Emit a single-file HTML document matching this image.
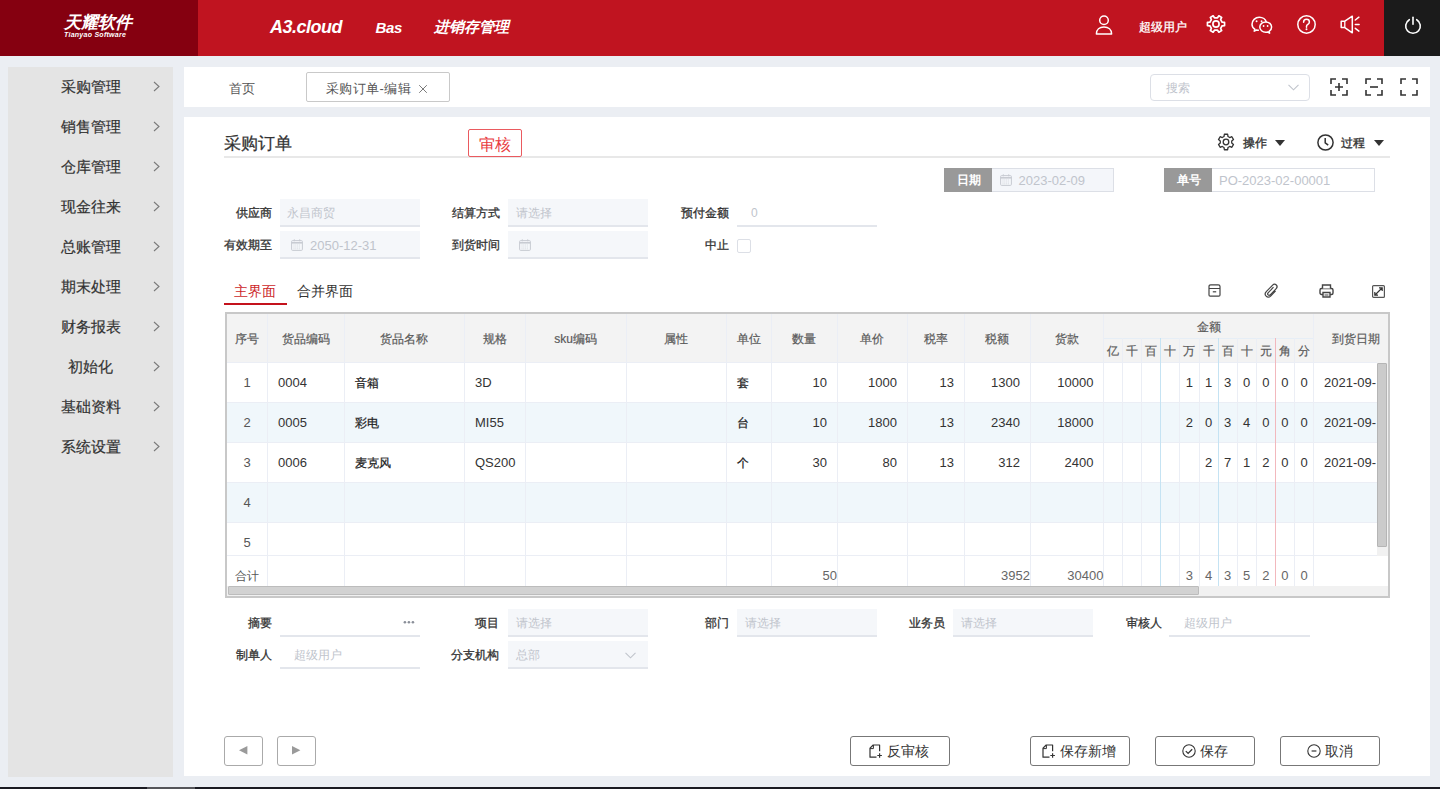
<!DOCTYPE html><html><head><meta charset="utf-8"><style>
*{box-sizing:border-box;margin:0;padding:0}
html,body{width:1440px;height:789px;overflow:hidden;background:#ebeef3;font-family:"Liberation Sans",sans-serif;color:#333;position:relative}
.t{position:absolute;white-space:nowrap}
.b{position:absolute}
.ht{position:absolute;color:#fff;font-weight:bold;font-style:italic;white-space:nowrap}
svg{position:absolute;overflow:visible}
.lbl{position:absolute;white-space:nowrap;font-size:12px;line-height:16px;color:#333;font-weight:normal;-webkit-text-stroke:0.3px #333;text-align:right}
.inp{position:absolute;background:#f5f7fa;border-bottom:2px solid #e3e6ec}
.inpw{position:absolute;border-bottom:2px solid #e3e6ec}
.ph{position:absolute;white-space:nowrap;font-size:12px;line-height:16px;color:#c0c4cc}
.cj{-webkit-text-stroke:0.25px #222}
.hd{-webkit-text-stroke:0.2px #5a5a5a}
.btn{position:absolute;border:1px solid #777;border-radius:3px;background:#fff;font-size:14px;line-height:28px;color:#333;text-align:center;white-space:nowrap}
</style></head><body>
<div class="b" style="left:0;top:0;width:1440px;height:56px;background:#c01420"></div>
<div class="b" style="left:0;top:0;width:198px;height:56px;background:#850010"></div>
<div class="ht" style="left:63.5px;top:13.3px;font-size:17px;line-height:19px;letter-spacing:0.3px">天耀软件</div>
<div class="ht" style="left:64px;top:31px;font-size:7px;line-height:7px;letter-spacing:0.27px">Tianyao Software</div>
<div class="ht" style="left:270px;top:16px;font-size:18px;line-height:22px;letter-spacing:-0.5px">A3.cloud</div>
<div class="ht" style="left:375.5px;top:18px;font-size:15px;line-height:20px;letter-spacing:-0.3px">Bas</div>
<div class="ht" style="left:434px;top:17px;font-size:15px;line-height:20px">进销存管理</div>
<div class="t" style="left:1139px;top:19px;font-size:12px;line-height:16px;color:#fff;-webkit-text-stroke:0.3px #fff">超级用户</div>
<svg style="left:1095px;top:15px" width="18" height="20" viewBox="0 0 18 20"><circle cx="9" cy="5.3" r="4.3" fill="none" stroke="#fff" stroke-width="1.5"/><path d="M1.4 19.1C1.4 14.6 4.6 12.1 9 12.1s7.6 2.5 7.6 7z" fill="none" stroke="#fff" stroke-width="1.5" stroke-linejoin="round"/></svg>
<svg style="left:1206.3px;top:14px" width="20" height="20" viewBox="0 0 20 20"><path fill="none" stroke="#fff" stroke-width="1.7" stroke-linejoin="round" d="M16.15 8.21 L18.55 8.37 L18.55 11.63 L16.15 11.79 L14.62 14.43 L15.68 16.59 L12.86 18.22 L11.53 16.22 L8.47 16.22 L7.14 18.22 L4.32 16.59 L5.38 14.43 L3.85 11.79 L1.45 11.63 L1.45 8.37 L3.85 8.21 L5.38 5.57 L4.32 3.41 L7.14 1.78 L8.47 3.78 L11.53 3.78 L12.86 1.78 L15.68 3.41 L14.62 5.57Z"/><circle cx="10" cy="10" r="3.1" fill="none" stroke="#fff" stroke-width="1.7"/></svg>
<svg style="left:1251px;top:16px" width="22" height="19" viewBox="0 0 22 19"><path d="M7.9 14.3c-.8 0-1.6-.1-2.3-.3L3.2 15.2l.6-2C2 12 1 10.3 1 8.2 1 4.7 4.2 1.2 8.3 1.2c3.5 0 6.4 2.2 7 5" fill="none" stroke="#fff" stroke-width="1.5" stroke-linejoin="round"/><path d="M14.7 5.9c-3.3 0-5.9 2.3-5.9 5.2s2.6 5.2 5.9 5.2c.7 0 1.3-.1 1.9-.3l2 1.1-.5-1.8c1.5-.9 2.5-2.4 2.5-4.2 0-2.9-2.6-5.2-5.9-5.2z" fill="none" stroke="#fff" stroke-width="1.5" stroke-linejoin="round"/><circle cx="5.6" cy="5.3" r=".95" fill="#fff"/><circle cx="10.6" cy="5.3" r=".95" fill="#fff"/><circle cx="12.6" cy="10" r=".9" fill="#fff"/><circle cx="16.6" cy="10" r=".9" fill="#fff"/></svg>
<svg style="left:1297px;top:15px" width="19" height="19" viewBox="0 0 19 19"><circle cx="9.5" cy="9.5" r="8.7" fill="none" stroke="#fff" stroke-width="1.5"/><path d="M6.6 7.2c0-1.7 1.3-2.9 2.9-2.9s2.9 1.2 2.9 2.7c0 1.4-1 2-1.9 2.6-.7.5-1 .9-1 1.8v.8" fill="none" stroke="#fff" stroke-width="1.5" stroke-linecap="round"/><circle cx="9.5" cy="14.2" r="1" fill="#fff"/></svg>
<svg style="left:1340px;top:15px" width="20" height="19" viewBox="0 0 20 19"><path d="M1.2 6.2h3.6L12.3 1.2v16.6L4.8 12.6H1.2z" fill="none" stroke="#fff" stroke-width="1.5" stroke-linejoin="round"/><path d="M4.8 6.2v6.4" stroke="#fff" stroke-width="1.3"/><path d="M15.3 5l3.6-2.8M15.3 9.4h3.8M15.3 13.3l3.6 2.8" stroke="#fff" stroke-width="1.5" stroke-linecap="round"/></svg>
<div class="b" style="left:1384px;top:0;width:56px;height:56px;background:#1b1b1b"></div>
<svg style="left:1404px;top:15.5px" width="18" height="18" viewBox="0 0 18 18"><path d="M5.3 3.7A7.3 7.3 0 1 0 12.7 3.7" fill="none" stroke="#fff" stroke-width="1.6" stroke-linecap="round"/><path d="M9 1.2v7" stroke="#fff" stroke-width="1.6" stroke-linecap="round"/></svg>
<div class="b" style="left:8px;top:67px;width:165px;height:710px;background:#e4e4e4"></div>
<div class="t" style="left:61px;top:77px;font-size:15px;line-height:20px;color:#333;-webkit-text-stroke:0.2px #333">采购管理</div>
<svg style="left:153px;top:80.5px" width="7" height="11" viewBox="0 0 7 11"><path d="M1 1l5 4.5L1 10" fill="none" stroke="#7a7a7a" stroke-width="1.1"/></svg>
<div class="t" style="left:61px;top:117px;font-size:15px;line-height:20px;color:#333;-webkit-text-stroke:0.2px #333">销售管理</div>
<svg style="left:153px;top:120.5px" width="7" height="11" viewBox="0 0 7 11"><path d="M1 1l5 4.5L1 10" fill="none" stroke="#7a7a7a" stroke-width="1.1"/></svg>
<div class="t" style="left:61px;top:157px;font-size:15px;line-height:20px;color:#333;-webkit-text-stroke:0.2px #333">仓库管理</div>
<svg style="left:153px;top:160.5px" width="7" height="11" viewBox="0 0 7 11"><path d="M1 1l5 4.5L1 10" fill="none" stroke="#7a7a7a" stroke-width="1.1"/></svg>
<div class="t" style="left:61px;top:197px;font-size:15px;line-height:20px;color:#333;-webkit-text-stroke:0.2px #333">现金往来</div>
<svg style="left:153px;top:200.5px" width="7" height="11" viewBox="0 0 7 11"><path d="M1 1l5 4.5L1 10" fill="none" stroke="#7a7a7a" stroke-width="1.1"/></svg>
<div class="t" style="left:61px;top:237px;font-size:15px;line-height:20px;color:#333;-webkit-text-stroke:0.2px #333">总账管理</div>
<svg style="left:153px;top:240.5px" width="7" height="11" viewBox="0 0 7 11"><path d="M1 1l5 4.5L1 10" fill="none" stroke="#7a7a7a" stroke-width="1.1"/></svg>
<div class="t" style="left:61px;top:277px;font-size:15px;line-height:20px;color:#333;-webkit-text-stroke:0.2px #333">期末处理</div>
<svg style="left:153px;top:280.5px" width="7" height="11" viewBox="0 0 7 11"><path d="M1 1l5 4.5L1 10" fill="none" stroke="#7a7a7a" stroke-width="1.1"/></svg>
<div class="t" style="left:61px;top:317px;font-size:15px;line-height:20px;color:#333;-webkit-text-stroke:0.2px #333">财务报表</div>
<svg style="left:153px;top:320.5px" width="7" height="11" viewBox="0 0 7 11"><path d="M1 1l5 4.5L1 10" fill="none" stroke="#7a7a7a" stroke-width="1.1"/></svg>
<div class="t" style="left:68px;top:357px;font-size:15px;line-height:20px;color:#333;-webkit-text-stroke:0.2px #333">初始化</div>
<svg style="left:153px;top:360.5px" width="7" height="11" viewBox="0 0 7 11"><path d="M1 1l5 4.5L1 10" fill="none" stroke="#7a7a7a" stroke-width="1.1"/></svg>
<div class="t" style="left:61px;top:397px;font-size:15px;line-height:20px;color:#333;-webkit-text-stroke:0.2px #333">基础资料</div>
<svg style="left:153px;top:400.5px" width="7" height="11" viewBox="0 0 7 11"><path d="M1 1l5 4.5L1 10" fill="none" stroke="#7a7a7a" stroke-width="1.1"/></svg>
<div class="t" style="left:61px;top:437px;font-size:15px;line-height:20px;color:#333;-webkit-text-stroke:0.2px #333">系统设置</div>
<svg style="left:153px;top:440.5px" width="7" height="11" viewBox="0 0 7 11"><path d="M1 1l5 4.5L1 10" fill="none" stroke="#7a7a7a" stroke-width="1.1"/></svg>
<div class="b" style="left:184px;top:67px;width:1246px;height:40px;background:#fff"></div>
<div class="t" style="left:229px;top:80px;font-size:13px;line-height:17px;color:#555">首页</div>
<div class="b" style="left:306px;top:72px;width:144px;height:30px;border:1px solid #c9c9c9;border-radius:2px"></div>
<div class="t" style="left:326px;top:80px;font-size:13px;line-height:17px;color:#555;letter-spacing:0.4px">采购订单-编辑</div>
<svg style="left:418px;top:84px" width="10" height="10" viewBox="0 0 10 10"><path d="M1.2 1.2l7.6 7.6M8.8 1.2L1.2 8.8" stroke="#7a7a7a" stroke-width="1"/></svg>
<div class="b" style="left:1150px;top:74px;width:160px;height:27px;border:1px solid #dcdfe6;border-radius:4px"></div>
<div class="t" style="left:1166px;top:80px;font-size:12px;line-height:16px;color:#c0c4cc">搜索</div>
<svg style="left:1288px;top:84px" width="11" height="7" viewBox="0 0 11 7"><path d="M.5 .8l5 5 5-5" fill="none" stroke="#c0c4cc" stroke-width="1.1"/></svg>
<svg style="left:1330px;top:78px" width="18" height="18" viewBox="0 0 18 18"><path d="M1 6V1h5M12 1h5v5M17 12v5h-5M6 17H1v-5" fill="none" stroke="#333" stroke-width="1.6"/><path d="M9 5v8M5 9h8" stroke="#333" stroke-width="1.6"/></svg>
<svg style="left:1365px;top:78px" width="18" height="18" viewBox="0 0 18 18"><path d="M1 6V1h5M12 1h5v5M17 12v5h-5M6 17H1v-5" fill="none" stroke="#333" stroke-width="1.6"/><path d="M5 9h8" stroke="#333" stroke-width="1.6"/></svg>
<svg style="left:1400px;top:78px" width="18" height="18" viewBox="0 0 18 18"><path d="M1 6V1h5M12 1h5v5M17 12v5h-5M6 17H1v-5" fill="none" stroke="#333" stroke-width="1.6"/></svg>
<div class="b" style="left:184px;top:117px;width:1246px;height:659px;background:#fff"></div>
<div class="t" style="left:224px;top:134px;font-size:17px;line-height:20px;color:#333;-webkit-text-stroke:0.25px #333">采购订单</div>
<div class="b" style="left:224px;top:156px;width:1166px;height:2px;background:#e8e8e8"></div>
<div class="b" style="left:468px;top:129px;width:54px;height:28px;border:1px solid #ea5a5f;border-radius:2px"></div>
<div class="t" style="left:479px;top:135.5px;font-size:16px;line-height:18px;color:#e83a40">审核</div>
<svg style="left:1216.4px;top:132.2px" width="20" height="20" viewBox="0 0 20 20"><path fill="none" stroke="#333" stroke-width="1.3" stroke-linejoin="round" d="M15.72 10.97 L17.51 12.44 L15.87 15.29 L13.70 14.47 L12.02 15.44 L11.64 17.73 L8.36 17.73 L7.98 15.44 L6.30 14.47 L4.13 15.29 L2.49 12.44 L4.28 10.97 L4.28 9.03 L2.49 7.56 L4.13 4.71 L6.30 5.53 L7.98 4.56 L8.36 2.27 L11.64 2.27 L12.02 4.56 L13.70 5.53 L15.87 4.71 L17.51 7.56 L15.72 9.03Z"/><circle cx="10" cy="10" r="2.8" fill="none" stroke="#333" stroke-width="1.3"/></svg>
<div class="t" style="left:1243px;top:135px;font-size:12px;line-height:16px;color:#333;-webkit-text-stroke:0.35px #333">操作</div>
<svg style="left:1275px;top:140px" width="10" height="6" viewBox="0 0 10 6"><path d="M0 0h10L5 6z" fill="#333"/></svg>
<svg style="left:1317px;top:134px" width="17" height="17" viewBox="0 0 17 17"><circle cx="8.5" cy="8.5" r="7.6" fill="none" stroke="#333" stroke-width="1.5"/><path d="M8.2 4v4.8l3 2.4" fill="none" stroke="#333" stroke-width="1.5"/></svg>
<div class="t" style="left:1341px;top:135px;font-size:12px;line-height:16px;color:#333;-webkit-text-stroke:0.35px #333">过程</div>
<svg style="left:1374px;top:140px" width="10" height="6" viewBox="0 0 10 6"><path d="M0 0h10L5 6z" fill="#333"/></svg>
<div class="b" style="left:944px;top:168px;width:48px;height:24px;background:#999"></div>
<div class="t" style="left:956.5px;top:172px;font-size:12px;line-height:16px;color:#fff;font-weight:bold">日期</div>
<div class="b" style="left:992px;top:168px;width:122px;height:24px;background:#f4f6fa;border:1px solid #dcdfe6;border-left:none"></div>
<svg style="left:999.5px;top:173.5px" width="12" height="12" viewBox="0 0 12 12"><rect x=".6" y="1.6" width="10.8" height="9.8" rx="1" fill="none" stroke="#c8cbd2" stroke-width="1"/><path d="M.6 3.8h10.8" stroke="#c8cbd2" stroke-width="1.6"/><path d="M3.3 .3v2M8.7 .3v2" stroke="#c8cbd2" stroke-width="1"/><path d="M2.5 6h7M2.5 8h7M2.5 9.8h7" stroke="#c8cbd2" stroke-width=".6" stroke-dasharray="1 .8"/></svg>
<div class="t" style="left:1018.5px;top:172.5px;font-size:13px;line-height:16px;color:#c0c4cc">2023-02-09</div>
<div class="b" style="left:1164px;top:168px;width:49px;height:24px;background:#999"></div>
<div class="t" style="left:1176.5px;top:172px;font-size:12px;line-height:16px;color:#fff;font-weight:bold">单号</div>
<div class="b" style="left:1212px;top:168px;width:163px;height:24px;background:#fff;border:1px solid #dcdfe6;border-left:none"></div>
<div class="t" style="left:1219px;top:172.5px;font-size:13px;line-height:16px;color:#c0c4cc">PO-2023-02-00001</div>
<div class="lbl" style="left:72px;width:200px;top:205px">供应商</div>
<div class="lbl" style="left:72px;width:200px;top:237px">有效期至</div>
<div class="lbl" style="left:300px;width:200px;top:205px">结算方式</div>
<div class="lbl" style="left:300px;width:200px;top:237px">到货时间</div>
<div class="lbl" style="left:529px;width:200px;top:205px">预付金额</div>
<div class="lbl" style="left:529px;width:200px;top:237px">中止</div>
<div class="inp" style="left:280px;top:199px;width:140px;height:28px"></div>
<div class="ph" style="left:287px;top:205px">永昌商贸</div>
<div class="inp" style="left:280px;top:231px;width:140px;height:28px"></div>
<svg style="left:291px;top:238.5px" width="12" height="12" viewBox="0 0 12 12"><rect x=".6" y="1.6" width="10.8" height="9.8" rx="1" fill="none" stroke="#c8cbd2" stroke-width="1"/><path d="M.6 3.8h10.8" stroke="#c8cbd2" stroke-width="1.6"/><path d="M3.3 .3v2M8.7 .3v2" stroke="#c8cbd2" stroke-width="1"/><path d="M2.5 6h7M2.5 8h7M2.5 9.8h7" stroke="#c8cbd2" stroke-width=".6" stroke-dasharray="1 .8"/></svg>
<div class="t" style="left:310px;top:238px;font-size:13px;line-height:16px;color:#c0c4cc">2050-12-31</div>
<div class="inp" style="left:508px;top:199px;width:140px;height:28px"></div>
<div class="ph" style="left:516px;top:205px">请选择</div>
<div class="inp" style="left:508px;top:231px;width:140px;height:28px"></div>
<svg style="left:519px;top:238.5px" width="12" height="12" viewBox="0 0 12 12"><rect x=".6" y="1.6" width="10.8" height="9.8" rx="1" fill="none" stroke="#c8cbd2" stroke-width="1"/><path d="M.6 3.8h10.8" stroke="#c8cbd2" stroke-width="1.6"/><path d="M3.3 .3v2M8.7 .3v2" stroke="#c8cbd2" stroke-width="1"/><path d="M2.5 6h7M2.5 8h7M2.5 9.8h7" stroke="#c8cbd2" stroke-width=".6" stroke-dasharray="1 .8"/></svg>
<div class="inpw" style="left:737px;top:199px;width:140px;height:28px"></div>
<div class="ph" style="left:751px;top:205px">0</div>
<div class="b" style="left:737px;top:239px;width:14px;height:14px;border:1px solid #dcdfe6;border-radius:2px;background:#fff"></div>
<div class="t" style="left:234px;top:282px;font-size:14px;line-height:18px;color:#cc1f2a">主界面</div>
<div class="b" style="left:224px;top:303px;width:63px;height:2px;background:#c4121c"></div>
<div class="t" style="left:297px;top:282px;font-size:14px;line-height:18px;color:#333">合并界面</div>
<svg style="left:1208px;top:284px" width="14" height="13" viewBox="0 0 14 13"><path d="M1 4.5V2.5Q1 .8 2.7 .8h7.6Q12 .8 12 2.5v2M1 4.5h11v6.5q0 1.2-1.2 1.2H2.2Q1 12.2 1 11z" fill="none" stroke="#444" stroke-width="1.2"/><path d="M4.8 7.8h3.4" stroke="#444" stroke-width="1.2"/></svg>
<svg style="left:1264px;top:284px" width="14" height="14" viewBox="0 0 14 14"><path d="M9.5 3.2L4.3 8.6c-.8.8-.8 1.7-.2 2.3s1.5.6 2.3-.2l5.6-5.8c1.3-1.3 1.3-2.9.3-3.9s-2.6-1-3.9.3L2.5 7.4C.9 9 .9 11 2.1 12.2s3.2 1.2 4.8-.4l4.7-4.9" fill="none" stroke="#444" stroke-width="1.2"/></svg>
<svg style="left:1319px;top:284px" width="15" height="14" viewBox="0 0 15 14"><rect x="1" y="4.5" width="13" height="6" rx="1.5" fill="none" stroke="#444" stroke-width="1.4"/><path d="M3.5 4.5V1h8v3.5M4 8.5h7v4.5H4z" fill="#fff" stroke="#444" stroke-width="1.4"/><path d="M5.5 11h4" stroke="#444" stroke-width="1"/></svg>
<svg style="left:1372px;top:285px" width="13" height="13" viewBox="0 0 13 13"><rect x=".6" y=".6" width="11.8" height="11.8" rx="1" fill="none" stroke="#555" stroke-width="1.2"/><path d="M3 10L10 3M7 2.8h3.2V6M2.8 7v3.2H6" fill="none" stroke="#333" stroke-width="1.2"/></svg>
<div class="b" style="left:225px;top:312px;width:1165px;height:286px;border:2px solid #c8c8c8;background:#fff"></div>
<div class="b" style="left:227px;top:314px;width:1161px;height:49px;background:#f3f3f3"></div>
<div class="b" style="left:227px;top:363px;width:1150px;height:40px;background:#fff"></div>
<div class="b" style="left:227px;top:403px;width:1150px;height:40px;background:#f0f7fb"></div>
<div class="b" style="left:227px;top:443px;width:1150px;height:40px;background:#fff"></div>
<div class="b" style="left:227px;top:483px;width:1150px;height:40px;background:#f0f7fb"></div>
<div class="b" style="left:227px;top:523px;width:1150px;height:40px;background:#fff"></div>
<div class="b" style="left:227px;top:556px;width:1161px;height:30px;background:#fff"></div>
<div class="b" style="left:227px;top:362px;width:1150px;height:1px;background:#ebeef5"></div>
<div class="b" style="left:227px;top:402px;width:1150px;height:1px;background:#ebeef5"></div>
<div class="b" style="left:227px;top:442px;width:1150px;height:1px;background:#ebeef5"></div>
<div class="b" style="left:227px;top:482px;width:1150px;height:1px;background:#ebeef5"></div>
<div class="b" style="left:227px;top:522px;width:1150px;height:1px;background:#ebeef5"></div>
<div class="b" style="left:227px;top:555px;width:1150px;height:1px;background:#ebeef5"></div>
<div class="b" style="left:1103.5px;top:338px;width:210.0px;height:1px;background:#e6eef6"></div>
<div class="b" style="left:266.5px;top:314px;width:1px;height:272px;background:#ebeef5"></div>
<div class="b" style="left:343.5px;top:314px;width:1px;height:272px;background:#ebeef5"></div>
<div class="b" style="left:463.5px;top:314px;width:1px;height:272px;background:#ebeef5"></div>
<div class="b" style="left:524.5px;top:314px;width:1px;height:272px;background:#ebeef5"></div>
<div class="b" style="left:625.5px;top:314px;width:1px;height:272px;background:#ebeef5"></div>
<div class="b" style="left:725.5px;top:314px;width:1px;height:272px;background:#ebeef5"></div>
<div class="b" style="left:770.5px;top:314px;width:1px;height:272px;background:#ebeef5"></div>
<div class="b" style="left:836.5px;top:314px;width:1px;height:272px;background:#ebeef5"></div>
<div class="b" style="left:906.5px;top:314px;width:1px;height:272px;background:#ebeef5"></div>
<div class="b" style="left:963.5px;top:314px;width:1px;height:272px;background:#ebeef5"></div>
<div class="b" style="left:1029.5px;top:314px;width:1px;height:272px;background:#ebeef5"></div>
<div class="b" style="left:1103.0px;top:314px;width:1px;height:272px;background:#ebeef5"></div>
<div class="b" style="left:1122.1px;top:338px;width:1px;height:248px;background:#ebeef5"></div>
<div class="b" style="left:1141.2px;top:338px;width:1px;height:248px;background:#ebeef5"></div>
<div class="b" style="left:1160.3px;top:338px;width:1px;height:248px;background:#c5e3f3"></div>
<div class="b" style="left:1179.4px;top:338px;width:1px;height:248px;background:#ebeef5"></div>
<div class="b" style="left:1198.5px;top:338px;width:1px;height:248px;background:#ebeef5"></div>
<div class="b" style="left:1217.6px;top:338px;width:1px;height:248px;background:#c5e3f3"></div>
<div class="b" style="left:1236.7px;top:338px;width:1px;height:248px;background:#ebeef5"></div>
<div class="b" style="left:1255.8px;top:338px;width:1px;height:248px;background:#ebeef5"></div>
<div class="b" style="left:1274.9px;top:338px;width:1px;height:248px;background:#f2b8bd"></div>
<div class="b" style="left:1294.0px;top:338px;width:1px;height:248px;background:#ebeef5"></div>
<div class="b" style="left:1313.1px;top:314px;width:1px;height:272px;background:#ebeef5"></div>
<div class="t hd" style="left:227px;width:40px;top:329.5px;height:18px;line-height:18px;text-align:center;font-size:12px;color:#5a5a5a;font-weight:normal">序号</div>
<div class="t hd" style="left:267px;width:77px;top:329.5px;height:18px;line-height:18px;text-align:center;font-size:12px;color:#5a5a5a;font-weight:normal">货品编码</div>
<div class="t hd" style="left:344px;width:120px;top:329.5px;height:18px;line-height:18px;text-align:center;font-size:12px;color:#5a5a5a;font-weight:normal">货品名称</div>
<div class="t hd" style="left:464px;width:61px;top:329.5px;height:18px;line-height:18px;text-align:center;font-size:12px;color:#5a5a5a;font-weight:normal">规格</div>
<div class="t hd" style="left:525px;width:101px;top:329.5px;height:18px;line-height:18px;text-align:center;font-size:12px;color:#5a5a5a;font-weight:normal">sku编码</div>
<div class="t hd" style="left:626px;width:100px;top:329.5px;height:18px;line-height:18px;text-align:center;font-size:12px;color:#5a5a5a;font-weight:normal">属性</div>
<div class="t hd" style="left:726px;width:45px;top:329.5px;height:18px;line-height:18px;text-align:center;font-size:12px;color:#5a5a5a;font-weight:normal">单位</div>
<div class="t hd" style="left:771px;width:66px;top:329.5px;height:18px;line-height:18px;text-align:center;font-size:12px;color:#5a5a5a;font-weight:normal">数量</div>
<div class="t hd" style="left:837px;width:70px;top:329.5px;height:18px;line-height:18px;text-align:center;font-size:12px;color:#5a5a5a;font-weight:normal">单价</div>
<div class="t hd" style="left:907px;width:57px;top:329.5px;height:18px;line-height:18px;text-align:center;font-size:12px;color:#5a5a5a;font-weight:normal">税率</div>
<div class="t hd" style="left:964px;width:66px;top:329.5px;height:18px;line-height:18px;text-align:center;font-size:12px;color:#5a5a5a;font-weight:normal">税额</div>
<div class="t hd" style="left:1030px;width:73.5px;top:329.5px;height:18px;line-height:18px;text-align:center;font-size:12px;color:#5a5a5a;font-weight:normal">货款</div>
<div class="t hd" style="left:1103.5px;width:210.0px;top:317.5px;height:18px;line-height:18px;text-align:center;font-size:12px;color:#5a5a5a;font-weight:normal">金额</div>
<div class="t hd" style="left:1103.5px;width:19.09999999999991px;top:341.5px;height:18px;line-height:18px;text-align:center;font-size:12px;color:#5a5a5a;font-weight:normal">亿</div>
<div class="t hd" style="left:1122.6px;width:19.100000000000136px;top:341.5px;height:18px;line-height:18px;text-align:center;font-size:12px;color:#5a5a5a;font-weight:normal">千</div>
<div class="t hd" style="left:1141.7px;width:19.09999999999991px;top:341.5px;height:18px;line-height:18px;text-align:center;font-size:12px;color:#5a5a5a;font-weight:normal">百</div>
<div class="t hd" style="left:1160.8px;width:19.100000000000136px;top:341.5px;height:18px;line-height:18px;text-align:center;font-size:12px;color:#5a5a5a;font-weight:normal">十</div>
<div class="t hd" style="left:1179.9px;width:19.09999999999991px;top:341.5px;height:18px;line-height:18px;text-align:center;font-size:12px;color:#5a5a5a;font-weight:normal">万</div>
<div class="t hd" style="left:1199.0px;width:19.09999999999991px;top:341.5px;height:18px;line-height:18px;text-align:center;font-size:12px;color:#5a5a5a;font-weight:normal">千</div>
<div class="t hd" style="left:1218.1px;width:19.100000000000136px;top:341.5px;height:18px;line-height:18px;text-align:center;font-size:12px;color:#5a5a5a;font-weight:normal">百</div>
<div class="t hd" style="left:1237.2px;width:19.09999999999991px;top:341.5px;height:18px;line-height:18px;text-align:center;font-size:12px;color:#5a5a5a;font-weight:normal">十</div>
<div class="t hd" style="left:1256.3px;width:19.100000000000136px;top:341.5px;height:18px;line-height:18px;text-align:center;font-size:12px;color:#5a5a5a;font-weight:normal">元</div>
<div class="t hd" style="left:1275.4px;width:19.09999999999991px;top:341.5px;height:18px;line-height:18px;text-align:center;font-size:12px;color:#5a5a5a;font-weight:normal">角</div>
<div class="t hd" style="left:1294.5px;width:19.09999999999991px;top:341.5px;height:18px;line-height:18px;text-align:center;font-size:12px;color:#5a5a5a;font-weight:normal">分</div>
<div class="t hd" style="left:1332px;top:329.5px;height:18px;line-height:18px;font-size:12px;color:#5a5a5a">到货日期</div>
<div class="t " style="left:227px;width:40px;top:374px;height:18px;line-height:18px;text-align:center;font-size:13px;color:#555;font-weight:normal">1</div>
<div class="t " style="left:278px;top:374px;height:18px;line-height:18px;font-size:13px;color:#333">0004</div>
<div class="t cj" style="left:355px;top:374px;height:18px;line-height:18px;font-size:12px;color:#222">音箱</div>
<div class="t " style="left:475px;top:374px;height:18px;line-height:18px;font-size:13px;color:#333">3D</div>
<div class="t cj" style="left:737px;top:374px;height:18px;line-height:18px;font-size:12px;color:#222">套</div>
<div class="t" style="left:627px;width:200px;top:374px;height:18px;line-height:18px;text-align:right;font-size:13px;color:#333">10</div>
<div class="t" style="left:697px;width:200px;top:374px;height:18px;line-height:18px;text-align:right;font-size:13px;color:#333">1000</div>
<div class="t" style="left:754px;width:200px;top:374px;height:18px;line-height:18px;text-align:right;font-size:13px;color:#333">13</div>
<div class="t" style="left:820px;width:200px;top:374px;height:18px;line-height:18px;text-align:right;font-size:13px;color:#333">1300</div>
<div class="t" style="left:893.5px;width:200px;top:374px;height:18px;line-height:18px;text-align:right;font-size:13px;color:#333">10000</div>
<div class="t " style="left:1294.5px;width:19.09999999999991px;top:374px;height:18px;line-height:18px;text-align:center;font-size:13px;color:#333;font-weight:normal">0</div>
<div class="t " style="left:1275.4px;width:19.09999999999991px;top:374px;height:18px;line-height:18px;text-align:center;font-size:13px;color:#333;font-weight:normal">0</div>
<div class="t " style="left:1256.3px;width:19.100000000000136px;top:374px;height:18px;line-height:18px;text-align:center;font-size:13px;color:#333;font-weight:normal">0</div>
<div class="t " style="left:1237.2px;width:19.09999999999991px;top:374px;height:18px;line-height:18px;text-align:center;font-size:13px;color:#333;font-weight:normal">0</div>
<div class="t " style="left:1218.1px;width:19.100000000000136px;top:374px;height:18px;line-height:18px;text-align:center;font-size:13px;color:#333;font-weight:normal">3</div>
<div class="t " style="left:1199.0px;width:19.09999999999991px;top:374px;height:18px;line-height:18px;text-align:center;font-size:13px;color:#333;font-weight:normal">1</div>
<div class="t " style="left:1179.9px;width:19.09999999999991px;top:374px;height:18px;line-height:18px;text-align:center;font-size:13px;color:#333;font-weight:normal">1</div>
<div class="t " style="left:1324px;top:374px;height:18px;line-height:18px;font-size:13px;color:#333">2021-09-</div>
<div class="t " style="left:227px;width:40px;top:414px;height:18px;line-height:18px;text-align:center;font-size:13px;color:#555;font-weight:normal">2</div>
<div class="t " style="left:278px;top:414px;height:18px;line-height:18px;font-size:13px;color:#333">0005</div>
<div class="t cj" style="left:355px;top:414px;height:18px;line-height:18px;font-size:12px;color:#222">彩电</div>
<div class="t " style="left:475px;top:414px;height:18px;line-height:18px;font-size:13px;color:#333">MI55</div>
<div class="t cj" style="left:737px;top:414px;height:18px;line-height:18px;font-size:12px;color:#222">台</div>
<div class="t" style="left:627px;width:200px;top:414px;height:18px;line-height:18px;text-align:right;font-size:13px;color:#333">10</div>
<div class="t" style="left:697px;width:200px;top:414px;height:18px;line-height:18px;text-align:right;font-size:13px;color:#333">1800</div>
<div class="t" style="left:754px;width:200px;top:414px;height:18px;line-height:18px;text-align:right;font-size:13px;color:#333">13</div>
<div class="t" style="left:820px;width:200px;top:414px;height:18px;line-height:18px;text-align:right;font-size:13px;color:#333">2340</div>
<div class="t" style="left:893.5px;width:200px;top:414px;height:18px;line-height:18px;text-align:right;font-size:13px;color:#333">18000</div>
<div class="t " style="left:1294.5px;width:19.09999999999991px;top:414px;height:18px;line-height:18px;text-align:center;font-size:13px;color:#333;font-weight:normal">0</div>
<div class="t " style="left:1275.4px;width:19.09999999999991px;top:414px;height:18px;line-height:18px;text-align:center;font-size:13px;color:#333;font-weight:normal">0</div>
<div class="t " style="left:1256.3px;width:19.100000000000136px;top:414px;height:18px;line-height:18px;text-align:center;font-size:13px;color:#333;font-weight:normal">0</div>
<div class="t " style="left:1237.2px;width:19.09999999999991px;top:414px;height:18px;line-height:18px;text-align:center;font-size:13px;color:#333;font-weight:normal">4</div>
<div class="t " style="left:1218.1px;width:19.100000000000136px;top:414px;height:18px;line-height:18px;text-align:center;font-size:13px;color:#333;font-weight:normal">3</div>
<div class="t " style="left:1199.0px;width:19.09999999999991px;top:414px;height:18px;line-height:18px;text-align:center;font-size:13px;color:#333;font-weight:normal">0</div>
<div class="t " style="left:1179.9px;width:19.09999999999991px;top:414px;height:18px;line-height:18px;text-align:center;font-size:13px;color:#333;font-weight:normal">2</div>
<div class="t " style="left:1324px;top:414px;height:18px;line-height:18px;font-size:13px;color:#333">2021-09-</div>
<div class="t " style="left:227px;width:40px;top:454px;height:18px;line-height:18px;text-align:center;font-size:13px;color:#555;font-weight:normal">3</div>
<div class="t " style="left:278px;top:454px;height:18px;line-height:18px;font-size:13px;color:#333">0006</div>
<div class="t cj" style="left:355px;top:454px;height:18px;line-height:18px;font-size:12px;color:#222">麦克风</div>
<div class="t " style="left:475px;top:454px;height:18px;line-height:18px;font-size:13px;color:#333">QS200</div>
<div class="t cj" style="left:737px;top:454px;height:18px;line-height:18px;font-size:12px;color:#222">个</div>
<div class="t" style="left:627px;width:200px;top:454px;height:18px;line-height:18px;text-align:right;font-size:13px;color:#333">30</div>
<div class="t" style="left:697px;width:200px;top:454px;height:18px;line-height:18px;text-align:right;font-size:13px;color:#333">80</div>
<div class="t" style="left:754px;width:200px;top:454px;height:18px;line-height:18px;text-align:right;font-size:13px;color:#333">13</div>
<div class="t" style="left:820px;width:200px;top:454px;height:18px;line-height:18px;text-align:right;font-size:13px;color:#333">312</div>
<div class="t" style="left:893.5px;width:200px;top:454px;height:18px;line-height:18px;text-align:right;font-size:13px;color:#333">2400</div>
<div class="t " style="left:1294.5px;width:19.09999999999991px;top:454px;height:18px;line-height:18px;text-align:center;font-size:13px;color:#333;font-weight:normal">0</div>
<div class="t " style="left:1275.4px;width:19.09999999999991px;top:454px;height:18px;line-height:18px;text-align:center;font-size:13px;color:#333;font-weight:normal">0</div>
<div class="t " style="left:1256.3px;width:19.100000000000136px;top:454px;height:18px;line-height:18px;text-align:center;font-size:13px;color:#333;font-weight:normal">2</div>
<div class="t " style="left:1237.2px;width:19.09999999999991px;top:454px;height:18px;line-height:18px;text-align:center;font-size:13px;color:#333;font-weight:normal">1</div>
<div class="t " style="left:1218.1px;width:19.100000000000136px;top:454px;height:18px;line-height:18px;text-align:center;font-size:13px;color:#333;font-weight:normal">7</div>
<div class="t " style="left:1199.0px;width:19.09999999999991px;top:454px;height:18px;line-height:18px;text-align:center;font-size:13px;color:#333;font-weight:normal">2</div>
<div class="t " style="left:1324px;top:454px;height:18px;line-height:18px;font-size:13px;color:#333">2021-09-</div>
<div class="t " style="left:227px;width:40px;top:494px;height:18px;line-height:18px;text-align:center;font-size:13px;color:#555;font-weight:normal">4</div>
<div class="t " style="left:227px;width:40px;top:534px;height:18px;line-height:18px;text-align:center;font-size:13px;color:#555;font-weight:normal">5</div>
<div class="t " style="left:235px;top:567px;height:18px;line-height:18px;font-size:12px;color:#555">合计</div>
<div class="t" style="left:637px;width:200px;top:567px;height:18px;line-height:18px;text-align:right;font-size:13px;color:#666">50</div>
<div class="t" style="left:830px;width:200px;top:567px;height:18px;line-height:18px;text-align:right;font-size:13px;color:#666">3952</div>
<div class="t" style="left:903.5px;width:200px;top:567px;height:18px;line-height:18px;text-align:right;font-size:13px;color:#666">30400</div>
<div class="t " style="left:1294.5px;width:19.09999999999991px;top:567px;height:18px;line-height:18px;text-align:center;font-size:13px;color:#666;font-weight:normal">0</div>
<div class="t " style="left:1275.4px;width:19.09999999999991px;top:567px;height:18px;line-height:18px;text-align:center;font-size:13px;color:#666;font-weight:normal">0</div>
<div class="t " style="left:1256.3px;width:19.100000000000136px;top:567px;height:18px;line-height:18px;text-align:center;font-size:13px;color:#666;font-weight:normal">2</div>
<div class="t " style="left:1237.2px;width:19.09999999999991px;top:567px;height:18px;line-height:18px;text-align:center;font-size:13px;color:#666;font-weight:normal">5</div>
<div class="t " style="left:1218.1px;width:19.100000000000136px;top:567px;height:18px;line-height:18px;text-align:center;font-size:13px;color:#666;font-weight:normal">3</div>
<div class="t " style="left:1199.0px;width:19.09999999999991px;top:567px;height:18px;line-height:18px;text-align:center;font-size:13px;color:#666;font-weight:normal">4</div>
<div class="t " style="left:1179.9px;width:19.09999999999991px;top:567px;height:18px;line-height:18px;text-align:center;font-size:13px;color:#666;font-weight:normal">3</div>
<div class="b" style="left:1377px;top:363px;width:11px;height:193px;background:#f1f1f1"></div>
<div class="b" style="left:1377px;top:363px;width:10px;height:184px;background:#cbcbcb;border:1px solid #b5b5b5;border-radius:1px"></div>
<div class="b" style="left:227px;top:586px;width:1161px;height:10px;background:#f1f1f1"></div>
<div class="b" style="left:228px;top:586px;width:971px;height:9px;background:#d2d2d2;border:1px solid #bcbcbc;border-radius:1px"></div>
<div class="lbl" style="left:72px;width:200px;top:615px">摘要</div>
<div class="lbl" style="left:72px;width:200px;top:647px">制单人</div>
<div class="lbl" style="left:299px;width:200px;top:615px">项目</div>
<div class="lbl" style="left:299px;width:200px;top:647px">分支机构</div>
<div class="lbl" style="left:529px;width:200px;top:615px">部门</div>
<div class="lbl" style="left:745px;width:200px;top:615px">业务员</div>
<div class="lbl" style="left:962px;width:200px;top:615px">审核人</div>
<div class="inpw" style="left:280px;top:609px;width:140px;height:28px"></div>
<svg style="left:400px;top:618px" width="16" height="8" viewBox="0 0 16 8"><circle cx="4.9" cy="4.2" r="1.3" fill="#8a8f99"/><circle cx="8.9" cy="4.2" r="1.3" fill="#8a8f99"/><circle cx="12.9" cy="4.2" r="1.3" fill="#8a8f99"/></svg>
<div class="inpw" style="left:280px;top:641px;width:140px;height:28px"></div>
<div class="ph" style="left:294px;top:647px">超级用户</div>
<div class="inp" style="left:508px;top:609px;width:140px;height:28px"></div>
<div class="ph" style="left:516px;top:615px">请选择</div>
<div class="inp" style="left:508px;top:641px;width:140px;height:28px"></div>
<div class="ph" style="left:516px;top:647px">总部</div>
<svg style="left:625px;top:652px" width="11" height="7" viewBox="0 0 11 7"><path d="M.5 .8l5 5 5-5" fill="none" stroke="#c0c4cc" stroke-width="1.1"/></svg>
<div class="inp" style="left:737px;top:609px;width:140px;height:28px"></div>
<div class="ph" style="left:745px;top:615px">请选择</div>
<div class="inp" style="left:953px;top:609px;width:140px;height:28px"></div>
<div class="ph" style="left:961px;top:615px">请选择</div>
<div class="inpw" style="left:1169px;top:609px;width:141px;height:28px"></div>
<div class="ph" style="left:1184px;top:615px">超级用户</div>
<div class="btn" style="left:224px;top:736px;width:39px;height:30px;border-color:#aaa"></div>
<svg style="left:239.4px;top:746.3px" width="9" height="9" viewBox="0 0 9 9"><path d="M8.4 0v8.4L0 4.2z" fill="#9a9a9a"/></svg>
<div class="btn" style="left:277px;top:736px;width:39px;height:30px;border-color:#aaa"></div>
<svg style="left:292.2px;top:746.3px" width="9" height="9" viewBox="0 0 9 9"><path d="M0 0v8.4l8.4-4.2z" fill="#9a9a9a"/></svg>
<div class="btn" style="left:850px;top:736px;width:100px;height:30px"></div>
<svg style="left:869.0px;top:743.5px" width="14" height="14" viewBox="0 0 14 14"><path d="M10.6 7.2V1H4.2L1 4.2v9H7.5" fill="none" stroke="#333" stroke-width="1.2" stroke-linejoin="round"/><path d="M1 4.6h3.4V1" fill="none" stroke="#333" stroke-width="1"/><path d="M10.6 9.2v4.6M8.3 11.5h4.6" fill="none" stroke="#333" stroke-width="1.2"/></svg>
<div class="t" style="left:887.0px;top:742px;font-size:14px;line-height:18px;color:#333">反审核</div>
<div class="btn" style="left:1030px;top:736px;width:100px;height:30px"></div>
<svg style="left:1042.0px;top:743.5px" width="14" height="14" viewBox="0 0 14 14"><path d="M10.6 7.2V1H4.2L1 4.2v9H7.5" fill="none" stroke="#333" stroke-width="1.2" stroke-linejoin="round"/><path d="M1 4.6h3.4V1" fill="none" stroke="#333" stroke-width="1"/><path d="M10.6 9.2v4.6M8.3 11.5h4.6" fill="none" stroke="#333" stroke-width="1.2"/></svg>
<div class="t" style="left:1060.0px;top:742px;font-size:14px;line-height:18px;color:#333">保存新增</div>
<div class="btn" style="left:1155px;top:736px;width:100px;height:30px"></div>
<svg style="left:1182.0px;top:744px" width="14" height="14" viewBox="0 0 14 14"><circle cx="7" cy="7" r="6.2" fill="none" stroke="#333" stroke-width="1.1"/><path d="M3.8 7.1l2.3 2.3L10.2 5.2" fill="none" stroke="#333" stroke-width="1.3"/></svg>
<div class="t" style="left:1200.0px;top:742px;font-size:14px;line-height:18px;color:#333">保存</div>
<div class="btn" style="left:1280px;top:736px;width:100px;height:30px"></div>
<svg style="left:1307.0px;top:744px" width="14" height="14" viewBox="0 0 14 14"><circle cx="7" cy="7" r="6.2" fill="none" stroke="#333" stroke-width="1.1"/><path d="M4.6 7h4.8" fill="none" stroke="#333" stroke-width="1.2"/></svg>
<div class="t" style="left:1325.0px;top:742px;font-size:14px;line-height:18px;color:#333">取消</div>
<div class="b" style="left:0;top:787px;width:1440px;height:2px;background:#1a1a22"></div>
<div class="b" style="left:147px;top:787px;width:48px;height:2px;background:#55555a"></div>
</body></html>
